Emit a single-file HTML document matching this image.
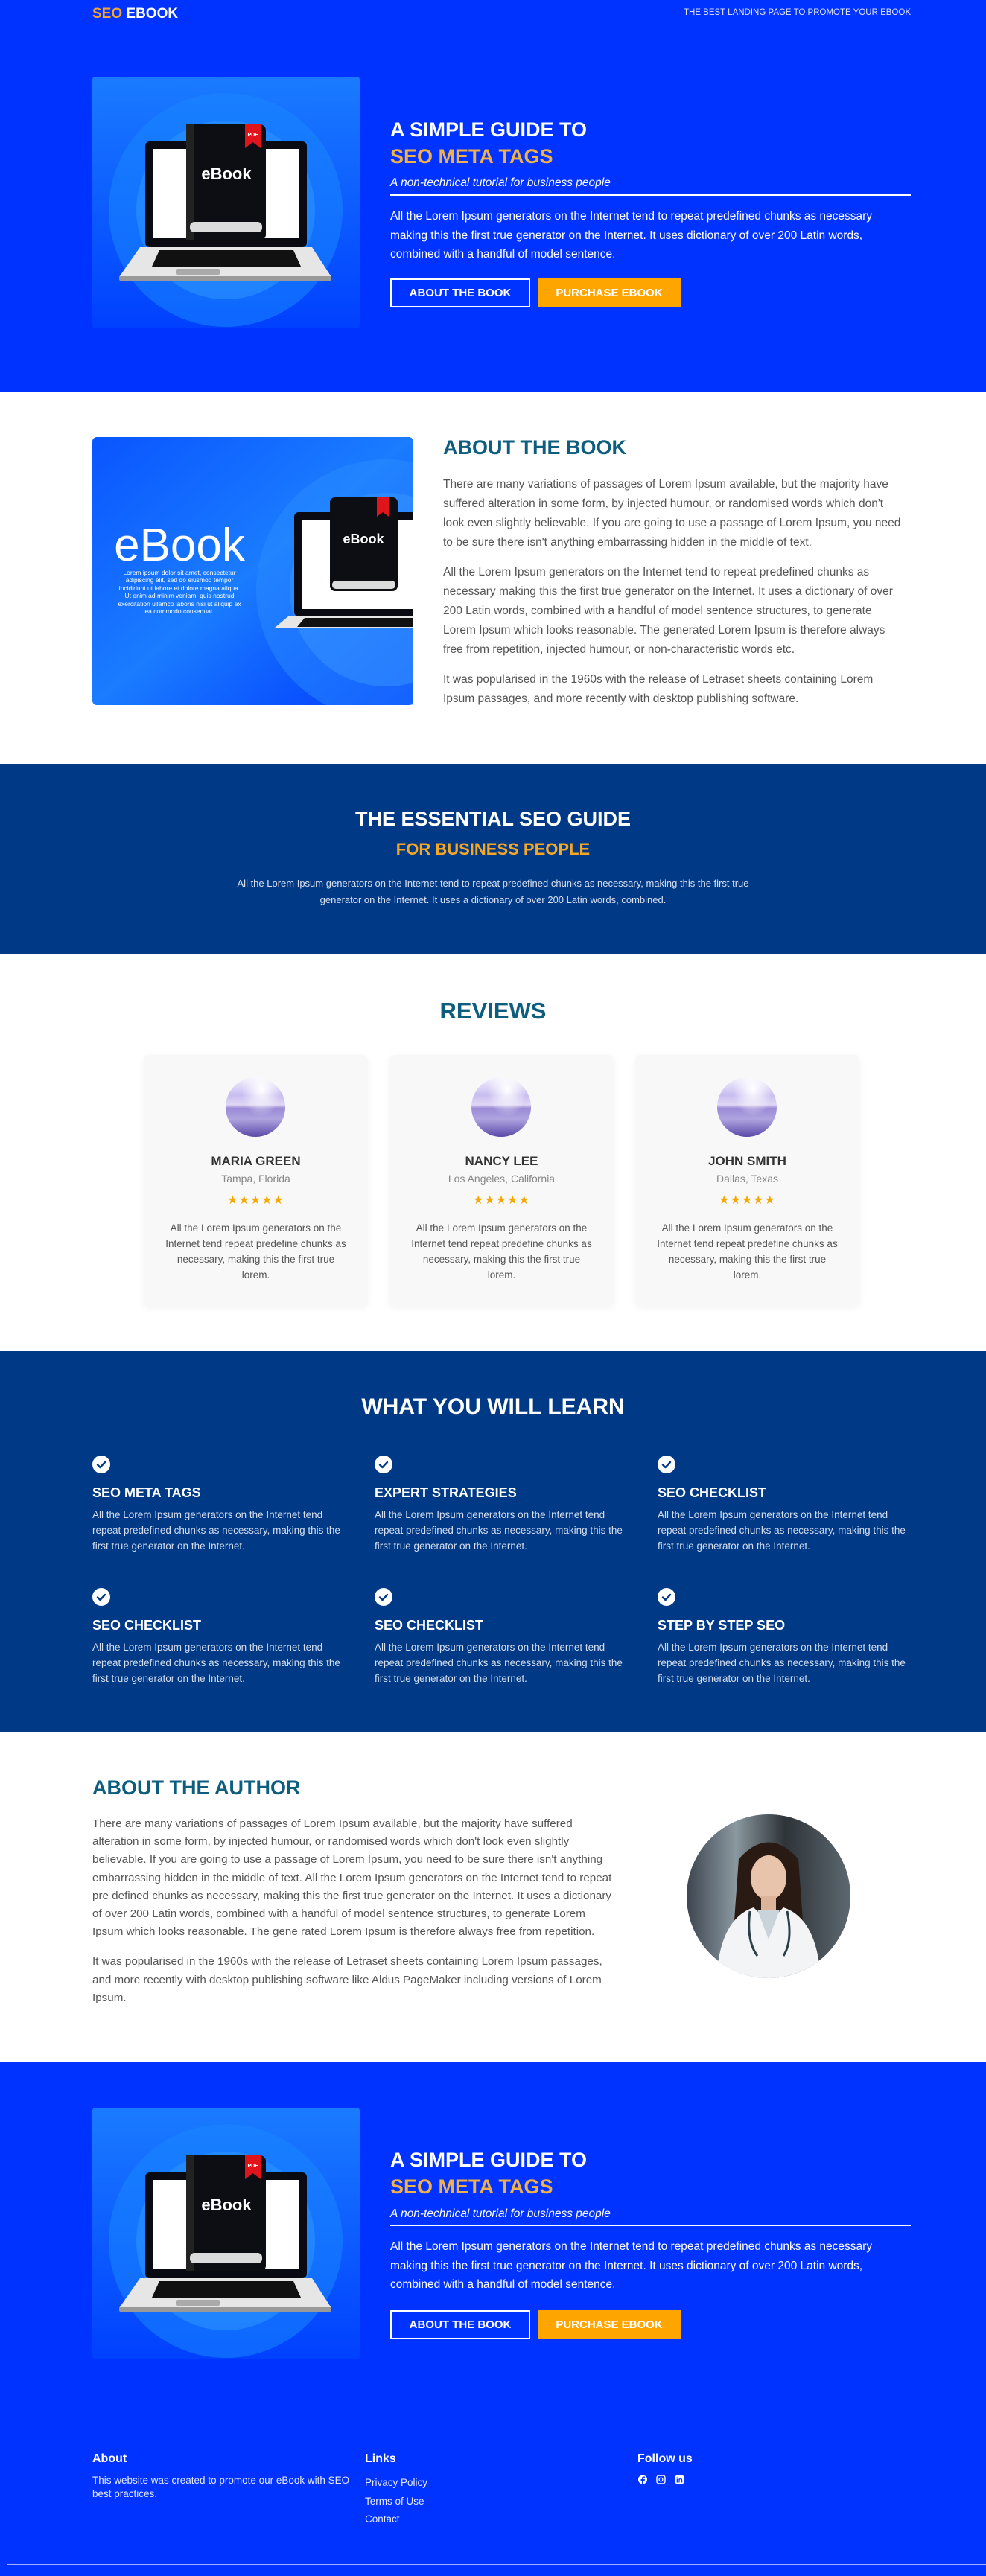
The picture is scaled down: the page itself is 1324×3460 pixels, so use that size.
<!DOCTYPE html>
<html><head><meta charset="utf-8">
<style>
*{margin:0;padding:0;box-sizing:border-box}
body{width:1324px;height:3460px;font-family:"Liberation Sans",Arial,sans-serif;background:#fff;position:relative;overflow:hidden}
.abs{position:absolute}
.blue{background:#0033ff}
.navy{background:#003a87}
h1,h2,h3{font-weight:bold}
.btn{position:absolute;height:39px;display:flex;align-items:center;justify-content:center;font-weight:bold;font-size:15px;color:#fff}
.teal{color:#0d5e7e}
.card{position:absolute;top:1417px;width:301px;height:338px;background:#f8f8f8;border-radius:8px;box-shadow:0 2px 10px rgba(0,0,0,.05);text-align:center}
.card .av{position:absolute;left:110px;top:30px;width:80px;height:80px;border-radius:50%;background:radial-gradient(ellipse at 60% 20%,#fff 0%,rgba(255,255,255,0) 40%),linear-gradient(180deg,#f4f2fc 0%,#c8bdf0 30%,#e0d6f4 46%,#9a8ad6 52%,#b0a4e0 70%,#5a4aa8 100%)}
.card .n{position:absolute;top:133px;width:100%;font-size:17px;font-weight:bold;color:#333}
.card .l{position:absolute;top:158px;width:100%;font-size:14px;color:#888}
.card .s{position:absolute;top:185px;width:100%;font-size:16px;color:#f6a800;letter-spacing:1px}
.card .t{position:absolute;top:222px;left:28px;right:28px;font-size:13.5px;line-height:21px;color:#555}
.li{position:absolute;width:340px;color:#fff}
.li h3{position:absolute;top:40px;font-size:18px;white-space:nowrap}
.li p{position:absolute;top:69px;font-size:13.5px;line-height:21px;color:#d5ddef;width:340px}
</style></head><body>

<!-- HERO -->
<div class="abs blue" style="left:0;top:0;width:1324px;height:526px"></div>
<div class="abs" style="left:124px;top:8px;font-size:19px;font-weight:bold;color:#fff"><span style="color:#f0a537">SEO</span> EBOOK</div>
<div class="abs" style="right:101px;top:11px;font-size:11.5px;color:#dfe5ff">THE BEST LANDING PAGE TO PROMOTE YOUR EBOOK</div>

<svg class="abs" style="left:124px;top:103px" width="359" height="338" viewBox="0 0 359 338">
<defs><linearGradient id="g1" x1="0" y1="0" x2="0" y2="1"><stop offset="0" stop-color="#1a7bff"/><stop offset="1" stop-color="#0040ff"/></linearGradient></defs>
<rect width="359" height="338" rx="4" fill="url(#g1)"/>
<circle cx="179" cy="179" r="157" fill="#1a86ff" opacity=".55"/>
<circle cx="179" cy="179" r="120" fill="#2c92ff" opacity=".6"/>
<rect x="71" y="87" width="217" height="142" rx="6" fill="#0a0a12"/>
<rect x="81" y="97" width="196" height="120" fill="#fff"/>
<rect x="126" y="64" width="107" height="156" rx="8" fill="#0d0d14"/>
<rect x="126" y="64" width="10" height="156" fill="#222"/>
<path d="M205 64h21v32l-10.5-8l-10.5 8z" fill="#e2141b"/>
<text x="215.5" y="80" fill="#fff" font-size="7" font-weight="bold" text-anchor="middle">PDF</text>
<text x="180" y="138" fill="#fff" font-size="22" font-weight="bold" text-anchor="middle">eBook</text>
<rect x="131" y="195" width="97" height="14" rx="6" fill="#dcdcdc"/>
<path d="M64 229h231l26 40H36z" fill="#e6e6e6"/>
<path d="M90 233h180l10 22H80z" fill="#111"/>
<rect x="113" y="258" width="58" height="8" rx="2" fill="#aaa"/>
<rect x="36" y="268" width="285" height="6" rx="2" fill="#999"/>
</svg>

<div class="abs" style="left:524px;top:156px;font-size:27px;font-weight:bold;color:#fff;line-height:36px">A SIMPLE GUIDE TO<br><span style="color:#f0b04a">SEO META TAGS</span></div>
<div class="abs" style="left:524px;top:237px;font-size:15.5px;font-style:italic;color:#fff">A non-technical tutorial for business people</div>
<div class="abs" style="left:524px;top:261px;width:699px;height:2px;background:#fff"></div>
<div class="abs" style="left:524px;top:278px;width:700px;font-size:15.5px;line-height:25.5px;color:#fff">All the Lorem Ipsum generators on the Internet tend to repeat predefined chunks as necessary making this the first true generator on the Internet. It uses dictionary of over 200 Latin words, combined with a handful of model sentence.</div>
<div class="btn" style="left:524px;top:374px;width:188px;border:2px solid #fff">ABOUT THE BOOK</div>
<div class="btn" style="left:722px;top:374px;width:192px;background:#ffa500">PURCHASE EBOOK</div>

<!-- ABOUT BOOK -->
<svg class="abs" style="left:124px;top:587px" width="431" height="360" viewBox="0 0 431 360">
<defs><linearGradient id="g2" x1="0" y1="0" x2="1" y2="1"><stop offset="0" stop-color="#0a55ff"/><stop offset=".5" stop-color="#1a7cff"/><stop offset="1" stop-color="#0038ff"/></linearGradient></defs>
<rect width="431" height="360" rx="6" fill="url(#g2)"/>
<circle cx="395" cy="205" r="175" fill="#2a8cff" opacity=".5"/>
<circle cx="395" cy="205" r="130" fill="#3a96ff" opacity=".5"/>
<rect x="271" y="101" width="170" height="140" rx="6" fill="#0a0a12"/>
<rect x="281" y="111" width="160" height="120" fill="#fff"/>
<rect x="319" y="81" width="91" height="126" rx="7" fill="#0d0d14"/>
<path d="M382 81h16v26l-8-6l-8 6z" fill="#e2141b"/>
<text x="364" y="143" fill="#fff" font-size="18" font-weight="bold" text-anchor="middle">eBook</text>
<rect x="322" y="193" width="85" height="11" rx="5" fill="#dcdcdc"/>
<path d="M263 241h180v15H245z" fill="#e6e6e6"/>
<path d="M285 243h160v12H275z" fill="#111"/>
<text x="117" y="166" fill="#fff" font-size="62" text-anchor="middle">eBook</text>
<g fill="#fff" font-size="8.5" text-anchor="middle">
<text x="117" y="185">Lorem ipsum dolor sit amet, consectetur</text>
<text x="117" y="195">adipiscing elit, sed do eiusmod tempor</text>
<text x="117" y="206">incididunt ut labore et dolore magna aliqua.</text>
<text x="117" y="216">Ut enim ad minim veniam, quis nostrud</text>
<text x="117" y="227">exercitation ullamco laboris nisi ut aliquip ex</text>
<text x="117" y="237">ea commodo consequat.</text></g>
</svg>
<div class="abs teal" style="left:595px;top:586px;font-size:27px;font-weight:bold">ABOUT THE BOOK</div>
<div class="abs" style="left:595px;top:638px;width:622px;font-size:15.5px;line-height:26px;color:#555">
<p>There are many variations of passages of Lorem Ipsum available, but the majority have suffered alteration in some form, by injected humour, or randomised words which don't look even slightly believable. If you are going to use a passage of Lorem Ipsum, you need to be sure there isn't anything embarrassing hidden in the middle of text.</p>
<p style="margin-top:14px">All the Lorem Ipsum generators on the Internet tend to repeat predefined chunks as necessary making this the first true generator on the Internet. It uses a dictionary of over 200 Latin words, combined with a handful of model sentence structures, to generate Lorem Ipsum which looks reasonable. The generated Lorem Ipsum is therefore always free from repetition, injected humour, or non-characteristic words etc.</p>
<p style="margin-top:14px">It was popularised in the 1960s with the release of Letraset sheets containing Lorem Ipsum passages, and more recently with desktop publishing software.</p></div>

<!-- ESSENTIAL -->
<div class="abs navy" style="left:0;top:1026px;width:1324px;height:255px"></div>
<div class="abs" style="left:0;top:1085px;width:1324px;text-align:center;font-size:27px;font-weight:bold;color:#fff">THE ESSENTIAL SEO GUIDE</div>
<div class="abs" style="left:0;top:1128px;width:1324px;text-align:center;font-size:22px;font-weight:bold;color:#f5a623">FOR BUSINESS PEOPLE</div>
<div class="abs" style="left:300px;top:1176px;width:724px;text-align:center;font-size:13px;line-height:22px;color:#d8e0f0">All the Lorem Ipsum generators on the Internet tend to repeat predefined chunks as necessary, making this the first true generator on the Internet. It uses a dictionary of over 200 Latin words, combined.</div>

<!-- REVIEWS -->
<div class="abs teal" style="left:0;top:1340px;width:1324px;text-align:center;font-size:31px;font-weight:bold">REVIEWS</div>
<div class="card" style="left:193px"><div class="av"></div><div class="n">MARIA GREEN</div><div class="l">Tampa, Florida</div><div class="s">★★★★★</div><div class="t">All the Lorem Ipsum generators on the Internet tend repeat predefine chunks as necessary, making this the first true lorem.</div></div>
<div class="card" style="left:523px"><div class="av"></div><div class="n">NANCY LEE</div><div class="l">Los Angeles, California</div><div class="s">★★★★★</div><div class="t">All the Lorem Ipsum generators on the Internet tend repeat predefine chunks as necessary, making this the first true lorem.</div></div>
<div class="card" style="left:853px"><div class="av"></div><div class="n">JOHN SMITH</div><div class="l">Dallas, Texas</div><div class="s">★★★★★</div><div class="t">All the Lorem Ipsum generators on the Internet tend repeat predefine chunks as necessary, making this the first true lorem.</div></div>

<!-- LEARN -->
<div class="abs navy" style="left:0;top:1814px;width:1324px;height:513px"></div>
<div class="abs" style="left:0;top:1873px;width:1324px;text-align:center;font-size:30px;font-weight:bold;color:#fff">WHAT YOU WILL LEARN</div>
<svg width="0" height="0" style="position:absolute"><defs><g id="ck"><circle cx="12" cy="12" r="12" fill="#fff"/><path d="M7 12.5l3.5 3.5 6.5-7" stroke="#003a87" stroke-width="2.4" fill="none" stroke-linecap="round" stroke-linejoin="round"/></g></defs></svg>
<div class="li" style="left:124px;top:1955px"><svg width="24" height="24"><use href="#ck"/></svg><h3>SEO META TAGS</h3><p>All the Lorem Ipsum generators on the Internet tend repeat predefined chunks as necessary, making this the first true generator on the Internet.</p></div>
<div class="li" style="left:503px;top:1955px"><svg width="24" height="24"><use href="#ck"/></svg><h3>EXPERT STRATEGIES</h3><p>All the Lorem Ipsum generators on the Internet tend repeat predefined chunks as necessary, making this the first true generator on the Internet.</p></div>
<div class="li" style="left:883px;top:1955px"><svg width="24" height="24"><use href="#ck"/></svg><h3>SEO CHECKLIST</h3><p>All the Lorem Ipsum generators on the Internet tend repeat predefined chunks as necessary, making this the first true generator on the Internet.</p></div>
<div class="li" style="left:124px;top:2133px"><svg width="24" height="24"><use href="#ck"/></svg><h3>SEO CHECKLIST</h3><p>All the Lorem Ipsum generators on the Internet tend repeat predefined chunks as necessary, making this the first true generator on the Internet.</p></div>
<div class="li" style="left:503px;top:2133px"><svg width="24" height="24"><use href="#ck"/></svg><h3>SEO CHECKLIST</h3><p>All the Lorem Ipsum generators on the Internet tend repeat predefined chunks as necessary, making this the first true generator on the Internet.</p></div>
<div class="li" style="left:883px;top:2133px"><svg width="24" height="24"><use href="#ck"/></svg><h3>STEP BY STEP SEO</h3><p>All the Lorem Ipsum generators on the Internet tend repeat predefined chunks as necessary, making this the first true generator on the Internet.</p></div>

<!-- AUTHOR -->
<div class="abs teal" style="left:124px;top:2386px;font-size:27px;font-weight:bold">ABOUT THE AUTHOR</div>
<div class="abs" style="left:124px;top:2438px;width:704px;font-size:15.2px;line-height:24.2px;color:#555">
<p>There are many variations of passages of Lorem Ipsum available, but the majority have suffered alteration in some form, by injected humour, or randomised words which don't look even slightly believable. If you are going to use a passage of Lorem Ipsum, you need to be sure there isn't anything embarrassing hidden in the middle of text. All the Lorem Ipsum generators on the Internet tend to repeat pre defined chunks as necessary, making this the first true generator on the Internet. It uses a dictionary of over 200 Latin words, combined with a handful of model sentence structures, to generate Lorem Ipsum which looks reasonable. The gene rated Lorem Ipsum is therefore always free from repetition.</p>
<p style="margin-top:16px">It was popularised in the 1960s with the release of Letraset sheets containing Lorem Ipsum passages, and more recently with desktop publishing software like Aldus PageMaker including versions of Lorem Ipsum.</p></div>
<svg class="abs" style="left:922px;top:2437px" width="220" height="220" viewBox="0 0 220 220">
<defs><clipPath id="cc"><circle cx="110" cy="110" r="110"/></clipPath>
<linearGradient id="bg3" x1="0" x2="1"><stop offset="0" stop-color="#3d4650"/><stop offset=".3" stop-color="#8a98a0"/><stop offset=".6" stop-color="#2e3438"/><stop offset="1" stop-color="#5c6870"/></linearGradient></defs>
<g clip-path="url(#cc)">
<rect width="220" height="220" fill="url(#bg3)"/>
<path d="M70 60q40-45 80 0l8 110h-96z" fill="#2a1a14"/>
<ellipse cx="110" cy="85" rx="24" ry="30" fill="#e8c4ac"/>
<rect x="100" y="110" width="20" height="20" fill="#dcb49a"/>
<path d="M40 220q5-80 50-95l20 20 20-20q45 15 50 95z" fill="#f2f4f6"/>
<path d="M95 128l15 40 15-40z" fill="#c9d4da"/>
<path d="M85 130q-5 40 10 60M135 130q8 40-5 60" stroke="#2c3e46" stroke-width="3" fill="none"/>
</g></svg>

<!-- BOTTOM HERO -->
<div class="abs blue" style="left:0;top:2770px;width:1324px;height:690px"></div>
<svg class="abs" style="left:124px;top:2831px" width="359" height="338" viewBox="0 0 359 338">
<rect width="359" height="338" rx="4" fill="url(#g1)"/>
<circle cx="179" cy="179" r="157" fill="#1a86ff" opacity=".55"/>
<circle cx="179" cy="179" r="120" fill="#2c92ff" opacity=".6"/>
<rect x="71" y="87" width="217" height="142" rx="6" fill="#0a0a12"/>
<rect x="81" y="97" width="196" height="120" fill="#fff"/>
<rect x="126" y="64" width="107" height="156" rx="8" fill="#0d0d14"/>
<rect x="126" y="64" width="10" height="156" fill="#222"/>
<path d="M205 64h21v32l-10.5-8l-10.5 8z" fill="#e2141b"/>
<text x="215.5" y="80" fill="#fff" font-size="7" font-weight="bold" text-anchor="middle">PDF</text>
<text x="180" y="138" fill="#fff" font-size="22" font-weight="bold" text-anchor="middle">eBook</text>
<rect x="131" y="195" width="97" height="14" rx="6" fill="#dcdcdc"/>
<path d="M64 229h231l26 40H36z" fill="#e6e6e6"/>
<path d="M90 233h180l10 22H80z" fill="#111"/>
<rect x="113" y="258" width="58" height="8" rx="2" fill="#aaa"/>
<rect x="36" y="268" width="285" height="6" rx="2" fill="#999"/>
</svg>
<div class="abs" style="left:524px;top:2883px;font-size:27px;font-weight:bold;color:#fff;line-height:36px">A SIMPLE GUIDE TO<br><span style="color:#f0b04a">SEO META TAGS</span></div>
<div class="abs" style="left:524px;top:2965px;font-size:15.5px;font-style:italic;color:#fff">A non-technical tutorial for business people</div>
<div class="abs" style="left:524px;top:2988px;width:699px;height:2px;background:#fff"></div>
<div class="abs" style="left:524px;top:3005px;width:700px;font-size:15.5px;line-height:25.5px;color:#fff">All the Lorem Ipsum generators on the Internet tend to repeat predefined chunks as necessary making this the first true generator on the Internet. It uses dictionary of over 200 Latin words, combined with a handful of model sentence.</div>
<div class="btn" style="left:524px;top:3103px;width:188px;border:2px solid #fff">ABOUT THE BOOK</div>
<div class="btn" style="left:722px;top:3103px;width:192px;background:#ffa500">PURCHASE EBOOK</div>

<!-- FOOTER -->
<div class="abs" style="left:124px;top:3294px;font-size:16px;font-weight:bold;color:#fff">About</div>
<div class="abs" style="left:124px;top:3323px;width:370px;font-size:13.5px;line-height:18px;color:#e4e9ff">This website was created to promote our eBook with SEO best practices.</div>
<div class="abs" style="left:490px;top:3294px;font-size:16px;font-weight:bold;color:#fff">Links</div>
<div class="abs" style="left:490px;top:3323px;font-size:13.5px;line-height:24.5px;color:#e4e9ff">Privacy Policy<br>Terms of Use<br>Contact</div>
<div class="abs" style="left:856px;top:3294px;font-size:16px;font-weight:bold;color:#fff">Follow us</div>
<svg class="abs" style="left:857px;top:3324px" width="70" height="14" viewBox="0 0 70 14">
<circle cx="6" cy="6.5" r="6" fill="#fff"/><path d="M7 13V8h1.7l.3-2H7V5q0-.8.8-.8H9V2.5H7.5Q5 2.5 5 5v1H3.5v2H5v5z" fill="#0033ff"/>
<rect x="25" y="1" width="11" height="11" rx="3" fill="none" stroke="#fff" stroke-width="1.4"/><circle cx="30.5" cy="6.5" r="2.4" fill="none" stroke="#fff" stroke-width="1.3"/>
<rect x="50" y="1" width="11" height="11" rx="1.5" fill="#fff"/><path d="M52.3 5.5v5M52.3 3.3v.4M55 10.5v-5M55 7.5q0-2 1.8-2t1.8 2v3" stroke="#0033ff" stroke-width="1.3" fill="none"/>
</svg>
<div class="abs" style="left:10px;top:3444px;width:1314px;height:1px;background:#9fb0ff"></div>
</body></html>
